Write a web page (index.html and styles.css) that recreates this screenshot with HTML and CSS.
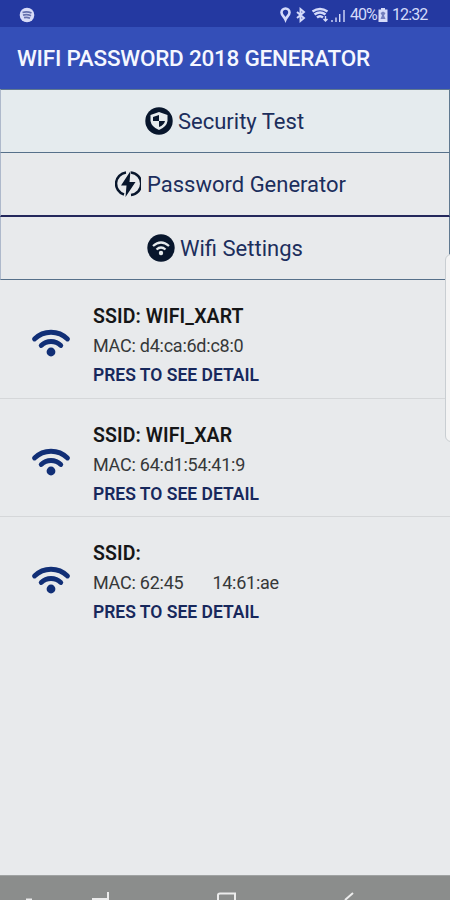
FILE: index.html
```html
<!DOCTYPE html>
<html lang="en">
<head>
<meta charset="utf-8">
<title>WIFI PASSWORD 2018 GENERATOR</title>
<link rel="stylesheet" href="styles.css">
</head>
<body>
<svg class="defs" width="0" height="0">
  <symbol id="wifi" viewBox="0 0 40 30">
    <path d="M3.500 11A23.500 23.500 0 0 1 36.500 11M10.200 17.500A14 14 0 0 1 29.800 17.500" fill="none" stroke="currentColor" stroke-width="4.800" stroke-linecap="round"/>
    <circle cx="20" cy="24" r="4.400" fill="currentColor"/>
  </symbol>
</svg>
<div class="screen">
  <div class="status">
    <svg class="notice" width="16" height="16" viewBox="0 0 16 16"><circle cx="8" cy="8" r="7.3" fill="#d8dcf8"/><path d="M3.5 5.5Q8 4 12.500 6M4 8.200Q8 7 12 8.800M5 10.700Q8 9.800 11 11.200" fill="none" stroke="#6570ad" stroke-width="1.800"/></svg>
    <svg class="icons" width="68" height="18" viewBox="0 0 68 18" fill="none" stroke="#d5dbfa">
      <path d="M6.500 13.500C5.500 11 2.500 9.200 2.500 6.500a4 4 0 0 1 8 0c0 2.700-3 4.500-4 7z" stroke-width="2.600"/>
      <path d="M18 6l7 6-3.500 3V3L25 6l-7 6" stroke-width="1.900"/>
      <path d="M33.500 5.500Q41 .5 48.500 5.500M35.500 8.500Q41 4.500 46.500 8.500M38 11.500Q41 9 44 11.500" stroke-width="2.500"/>
      <path d="M46.500 10v5m-2-2 2 2 2-2" stroke-width="1.400"/>
      <path d="M53 14v2M57 11.500V16M60.700 8v8M65 4v12" stroke-width="1.400"/>
    </svg>
    <span class="percent">40%</span>
    <svg class="battery" width="10" height="14" viewBox="0 0 10 14"><path d="M3 0h4v1.500h2.500V14h-9V1.500H3z" fill="#d5dbfa"/><path d="M2.500 5L5 3.500 7.500 5 6 7.500 7.500 11h-5L4 7.500z" fill="#737fbd"/></svg>
    <span class="clock">12:32</span>
  </div>
  <header class="appbar"><span>WIFI PASSWORD 2018 GENERATOR</span></header>
  <nav class="actions">
    <div class="action first">
      <svg width="28" height="28" viewBox="0 0 28 28"><circle cx="14" cy="14" r="13.700" fill="#08162c"/><path d="M14 5l8.500 3v6q-1 6-8.500 9-7.500-3-8.500-9V8z" fill="#e6ebed"/><path d="M14 8v6H8V10zM14 14h6q-1 4-6 6z" fill="#08162c"/></svg>
      <span>Security Test</span>
    </div>
    <div class="action second">
      <svg width="26" height="28" viewBox="0 0 26 28"><path d="M11 2.500A11.300 11.300 0 0 0 9 24.500M16 2.500A11.300 11.300 0 0 1 16 25" fill="none" stroke="#08162c" stroke-width="2.500"/><path d="M15.500 1L6 15.500h5.500L10.500 27 20.500 12h-6z" fill="#08162c"/></svg>
      <span>Password Generator</span>
    </div>
    <div class="action third">
      <svg width="28" height="28" viewBox="0 0 28 28"><circle cx="14" cy="14" r="13.700" fill="#08162c"/><path d="M6 12Q14 5 22 12M9.500 15.500Q14 11.500 18.500 15.500" fill="none" stroke="#e6ebed" stroke-width="2.300"/><circle cx="14" cy="19" r="2.200" fill="#e6ebed"/></svg>
      <span>Wifi Settings</span>
    </div>
  </nav>
  <main class="networks">
    <div class="network">
      <svg class="signal" width="40" height="30"><use href="#wifi"/></svg>
      <div class="info"><div class="ssid">SSID: WIFI_XART</div><div class="mac">MAC: d4:ca:6d:c8:0</div><div class="detail">PRES TO SEE DETAIL</div></div>
    </div>
    <div class="network">
      <svg class="signal" width="40" height="30"><use href="#wifi"/></svg>
      <div class="info"><div class="ssid">SSID: WIFI_XAR</div><div class="mac">MAC: 64:d1:54:41:9</div><div class="detail">PRES TO SEE DETAIL</div></div>
    </div>
    <div class="network last">
      <svg class="signal" width="40" height="30"><use href="#wifi"/></svg>
      <div class="info"><div class="ssid">SSID:</div><div class="mac">MAC: 62:45<span class="rest">14:61:ae</span></div><div class="detail">PRES TO SEE DETAIL</div></div>
    </div>
  </main>
  <footer class="navbar">
    <svg width="450" height="24" viewBox="0 0 450 24" fill="none" stroke="#ececec" stroke-width="2"><path d="M26 23.500h6M92 23h16v-7M218 24v-5q0-1.500 2-1.500h15V24M345 24l8-7"/></svg>
  </footer>
  <div class="edge"></div>
</div>
</body>
</html>
```
FILE: styles.css
```css
* { box-sizing: border-box; }
body { margin: 0; font-family: Roboto, "Liberation Sans", sans-serif; background: #e8eaec; }
.defs { position: absolute; }
.screen { position: relative; width: 450px; height: 900px; overflow: hidden; display: flex; flex-direction: column; white-space: nowrap; }
.status { height: 27px; background: #2439a1; color: #d5dbfa; display: flex; align-items: center; padding: 2px 22px 0 19px; font-size: 16px; flex: none; }
.icons { margin-left: auto; }
.percent { margin-left: 3px; width: 26px; letter-spacing: -1px; }
.battery { margin-left: 2px; }
.clock { margin-left: 4px; width: 36px; letter-spacing: -0.9px; }
.appbar { height: 62px; flex: none; background: #344fb8; color: #f5f7ff; padding: 0 0 0 17px; display: flex; align-items: center; font-size: 22.5px; letter-spacing: -0.23px; font-weight: 500; }
.actions { flex: none; color: #1c2e5c; font-size: 22px; }
.action { display: flex; align-items: center; height: 63px; border-bottom: 1px solid #56708a; border-left: 1px solid #aeb9cb; border-right: 1px solid #607990; gap: 5px; }
.action span { padding-top: 1px; }
.first { height: 64px; border-top: 1px solid #607990; background: #e5ebee; padding-left: 144px; }
.second { border-bottom: 2px solid #24285c; height: 64px; padding-left: 114px; gap: 6px; }
.third { height: 63px; padding-left: 146px; }
.networks { flex: 1; }
.network { display: flex; height: 118.500px; padding: 23px 0 0 31px; border-bottom: 1px solid #d5d7d9; }
.last { border-bottom: 0; }
.signal { margin: 25px 22px 0 0; color: #112f76; }
.ssid { font-size: 19.500px; letter-spacing: 0.1px; line-height: 27px; font-weight: 600; color: #151617; }
.mac { font-size: 18px; letter-spacing: -0.250px; line-height: 32px; color: #363839; }
.rest { margin-left: 29px; }
.detail { font-size: 17.500px; line-height: 27px; font-weight: 600; color: #17285c; }
.navbar { flex: none; height: 25px; background: #8b8d8c; border-top: 1px solid #a0a3a3; }
.navbar svg { display: block; }
.edge { position: absolute; left: 445px; top: 254px; width: 12px; height: 188px; background: #f4f4f4; border: 1px solid #c9ced2; border-radius: 6px; }
```
